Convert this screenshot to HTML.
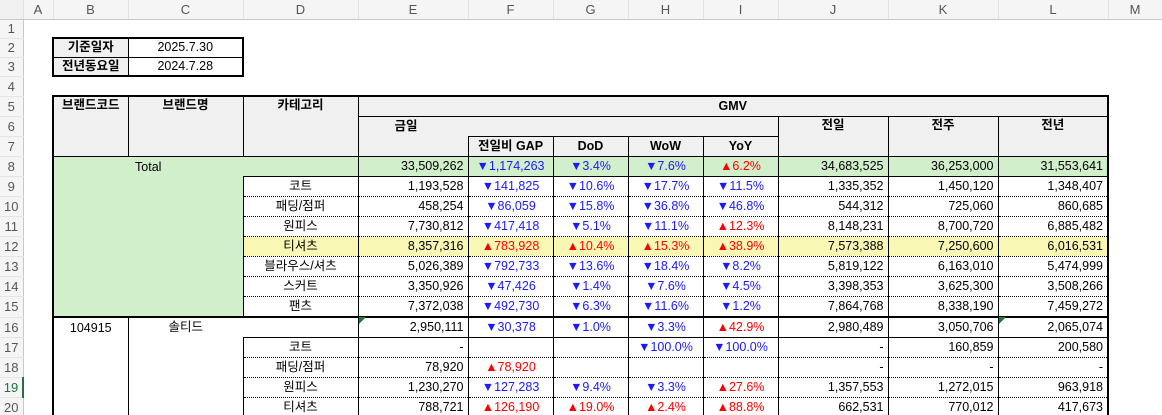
<!DOCTYPE html>
<html><head><meta charset="utf-8">
<style>
html,body{margin:0;padding:0;background:#fff;width:1162px;height:415px;overflow:hidden}
#w{position:relative;width:1162px;height:415px;overflow:hidden}
table{border-collapse:collapse;table-layout:fixed;width:1162px;font-family:"Liberation Sans","Noto Sans CJK KR",sans-serif;font-size:12.5px;color:#000}
td{padding:0 4px;white-space:nowrap;overflow:hidden;border:none;line-height:15px}
tr.h td{background:#f5f5f5;color:#555;text-align:center;font-size:13px;border-bottom:1px solid #c8c8c8;border-right:1px solid #e2e2e2;height:19px}
tr.x{height:20.1px}
td.n{background:#f5f5f5;color:#555;text-align:center;font-size:13px;border-right:1px solid #c8c8c8;border-bottom:1px solid #e4e4e4;padding:0}
td.sel{color:#1e7145;border-right:2px solid #1e7145}
.r{text-align:right}.c{text-align:center}.b{font-weight:bold}
.g{background:#d2efcb}.y{background:#f8f8b4}.hd{background:#f0f0f0}
.t{vertical-align:top;padding-top:1px}
.bl{color:#1a1aff}.rd{color:#ff0000}
.v{border-left:1px solid #000;border-right:1px solid #000}
.ts{border-top:1px solid #000}.td{border-top:1px dotted #000}.t2{border-top:2px solid #000}
.L2{border-left:2px solid #000}.R2{border-right:2px solid #000}
.tri{position:absolute;width:0;height:0;border-top:7px solid #1a7a3a;border-right:7px solid transparent}
</style></head><body><div id="w">
<table>
<colgroup><col style="width:23px"><col style="width:30px"><col style="width:75px"><col style="width:115px"><col style="width:115px"><col style="width:110px"><col style="width:85px"><col style="width:75px"><col style="width:75px"><col style="width:75px"><col style="width:110px"><col style="width:110px"><col style="width:110px"><col style="width:54px"></colgroup>
<tr class="h"><td style="background:#f0f0f0"></td><td>A</td><td>B</td><td>C</td><td>D</td><td>E</td><td>F</td><td>G</td><td>H</td><td>I</td><td>J</td><td>K</td><td>L</td><td>M</td></tr>
<tr style="height:18.5px"><td class="n">1</td><td colspan="13"></td></tr>
<tr style="height:19px"><td class="n">2</td><td></td><td class="c b hd" style="border:2px solid #000;border-right:1px solid #000;border-bottom:1px solid #000">기준일자</td><td class="c" style="border:2px solid #000;border-left:1px solid #000;border-bottom:1px solid #000">2025.7.30</td><td colspan="10"></td></tr>
<tr style="height:19px"><td class="n">3</td><td></td><td class="c b hd" style="border:2px solid #000;border-right:1px solid #000;border-top:1px solid #000">전년동요일</td><td class="c" style="border:2px solid #000;border-left:1px solid #000;border-top:1px solid #000">2024.7.28</td><td colspan="10"></td></tr>
<tr style="height:20px"><td class="n">4</td><td colspan="13"></td></tr>
<tr class="x"><td class="n">5</td><td></td>
<td rowspan="3" class="c b hd t v t2 L2">브랜드코드</td><td rowspan="3" class="c b hd t v t2">브랜드명</td><td rowspan="3" class="c b hd t v t2">카테고리</td>
<td colspan="8" class="c b hd v t2 R2">GMV</td><td></td></tr>
<tr class="x"><td class="n">6</td><td></td>
<td colspan="5" class="hd b v ts" style="padding-left:36px">금일</td>
<td rowspan="2" class="c b hd t v ts">전일</td><td rowspan="2" class="c b hd t v ts">전주</td><td rowspan="2" class="c b hd t v ts R2">전년</td><td></td></tr>
<tr class="x"><td class="n">7</td><td></td>
<td class="hd v"></td><td class="c b hd v ts">전일비 GAP</td><td class="c b hd v ts">DoD</td><td class="c b hd v ts">WoW</td><td class="c b hd v ts">YoY</td><td></td></tr>
<tr class="x"><td class="n">8</td><td></td>
<td colspan="2" rowspan="8" class="g ts L2" style="vertical-align:top;text-align:center;padding:3px 0 0 0;border-right:none;border-bottom:2px solid #000">Total</td>
<td class="g ts" style="border-left:none;border-right:1px solid #000"></td>
<td class="g r v ts">33,509,262</td><td class="g c v ts bl">▼1,174,263</td><td class="g c v ts bl">▼3.4%</td><td class="g c v ts bl">▼7.6%</td><td class="g c v ts rd">▲6.2%</td><td class="g r v ts">34,683,525</td><td class="g r v ts">36,253,000</td><td class="g r v ts R2">31,553,641</td><td></td></tr>
<tr class="x"><td class="n">9</td><td></td><td class="c v ts">코트</td><td class="r v ts">1,193,528</td><td class="c v ts bl">▼141,825</td><td class="c v ts bl">▼10.6%</td><td class="c v ts bl">▼17.7%</td><td class="c v ts bl">▼11.5%</td><td class="r v ts">1,335,352</td><td class="r v ts">1,450,120</td><td class="r v ts R2">1,348,407</td><td></td></tr>
<tr class="x"><td class="n">10</td><td></td><td class="c v td">패딩/점퍼</td><td class="r v td">458,254</td><td class="c v td bl">▼86,059</td><td class="c v td bl">▼15.8%</td><td class="c v td bl">▼36.8%</td><td class="c v td bl">▼46.8%</td><td class="r v td">544,312</td><td class="r v td">725,060</td><td class="r v td R2">860,685</td><td></td></tr>
<tr class="x"><td class="n">11</td><td></td><td class="c v td">원피스</td><td class="r v td">7,730,812</td><td class="c v td bl">▼417,418</td><td class="c v td bl">▼5.1%</td><td class="c v td bl">▼11.1%</td><td class="c v td rd">▲12.3%</td><td class="r v td">8,148,231</td><td class="r v td">8,700,720</td><td class="r v td R2">6,885,482</td><td></td></tr>
<tr class="x"><td class="n">12</td><td></td><td class="y c v td">티셔츠</td><td class="y r v td">8,357,316</td><td class="y c v td rd">▲783,928</td><td class="y c v td rd">▲10.4%</td><td class="y c v td rd">▲15.3%</td><td class="y c v td rd">▲38.9%</td><td class="y r v td">7,573,388</td><td class="y r v td">7,250,600</td><td class="y r v td R2">6,016,531</td><td></td></tr>
<tr class="x"><td class="n">13</td><td></td><td class="c v td">블라우스/셔츠</td><td class="r v td">5,026,389</td><td class="c v td bl">▼792,733</td><td class="c v td bl">▼13.6%</td><td class="c v td bl">▼18.4%</td><td class="c v td bl">▼8.2%</td><td class="r v td">5,819,122</td><td class="r v td">6,163,010</td><td class="r v td R2">5,474,999</td><td></td></tr>
<tr class="x"><td class="n">14</td><td></td><td class="c v td">스커트</td><td class="r v td">3,350,926</td><td class="c v td bl">▼47,426</td><td class="c v td bl">▼1.4%</td><td class="c v td bl">▼7.6%</td><td class="c v td bl">▼4.5%</td><td class="r v td">3,398,353</td><td class="r v td">3,625,300</td><td class="r v td R2">3,508,266</td><td></td></tr>
<tr class="x"><td class="n">15</td><td></td><td class="c v td">팬츠</td><td class="r v td">7,372,038</td><td class="c v td bl">▼492,730</td><td class="c v td bl">▼6.3%</td><td class="c v td bl">▼11.6%</td><td class="c v td bl">▼1.2%</td><td class="r v td">7,864,768</td><td class="r v td">8,338,190</td><td class="r v td R2">7,459,272</td><td></td></tr>
<tr class="x"><td class="n">16</td><td></td>
<td rowspan="5" class="c t2 L2" style="vertical-align:top;padding-top:3px;border-right:1px solid #000">104915</td>
<td class="c t2" style="border-left:1px solid #000;border-right:none">솔티드</td><td class="t2" style="border-left:none;border-right:1px solid #000"></td>
<td class="r v t2">2,950,111</td><td class="c v t2 bl">▼30,378</td><td class="c v t2 bl">▼1.0%</td><td class="c v t2 bl">▼3.3%</td><td class="c v t2 rd">▲42.9%</td><td class="r v t2">2,980,489</td><td class="r v t2">3,050,706</td><td class="r v t2 R2">2,065,074</td><td></td></tr>
<tr class="x"><td class="n">17</td><td></td><td class="v"></td><td class="c v ts">코트</td><td class="r v ts">-</td><td class="c v ts"></td><td class="c v ts"></td><td class="c v ts bl">▼100.0%</td><td class="c v ts bl">▼100.0%</td><td class="r v ts">-</td><td class="r v ts">160,859</td><td class="r v ts R2">200,580</td><td></td></tr>
<tr class="x"><td class="n">18</td><td></td><td class="v"></td><td class="c v td">패딩/점퍼</td><td class="r v td">78,920</td><td class="c v td rd">▲78,920</td><td class="c v td"></td><td class="c v td"></td><td class="c v td"></td><td class="r v td">-</td><td class="r v td">-</td><td class="r v td R2">-</td><td></td></tr>
<tr class="x"><td class="n sel">19</td><td></td><td class="v"></td><td class="c v td">원피스</td><td class="r v td">1,230,270</td><td class="c v td bl">▼127,283</td><td class="c v td bl">▼9.4%</td><td class="c v td bl">▼3.3%</td><td class="c v td rd">▲27.6%</td><td class="r v td">1,357,553</td><td class="r v td">1,272,015</td><td class="r v td R2">963,918</td><td></td></tr>
<tr class="x"><td class="n">20</td><td></td><td class="v"></td><td class="c v td">티셔츠</td><td class="r v td">788,721</td><td class="c v td rd">▲126,190</td><td class="c v td rd">▲19.0%</td><td class="c v td rd">▲2.4%</td><td class="c v td rd">▲88.8%</td><td class="r v td">662,531</td><td class="r v td">770,012</td><td class="r v td R2">417,673</td><td></td></tr>
</table>
<div class="tri" style="left:359px;top:317px"></div>
<div class="tri" style="left:999px;top:317px"></div>
</div></body></html>
